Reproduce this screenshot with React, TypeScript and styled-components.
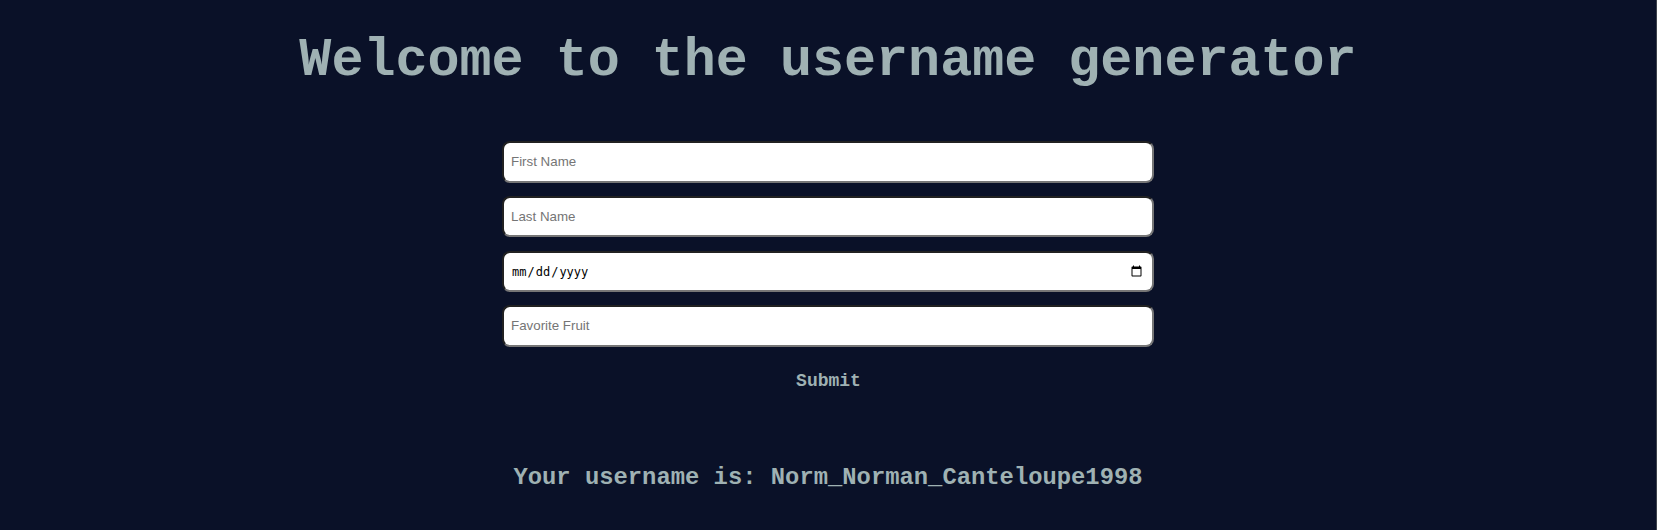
import React from 'react';
import styled, { createGlobalStyle } from 'styled-components';

const GlobalStyle = createGlobalStyle`
  * { box-sizing: border-box; }
  body { margin: 0; background: #0a1128; overflow: hidden; }
`;

const Page = styled.main`
  width: 100%;
  height: 530px;
  display: flex;
  flex-direction: column;
  align-items: center;
  border-right: 1px solid #3d424b;
  color: #9fb1b3;
  font-family: 'Courier New', 'Liberation Mono', monospace;
  font-weight: 700;
`;

const Title = styled.h1`
  margin: 31px 0 0;
  font-size: 53.4px;
  line-height: 60px;
  white-space: nowrap;
`;

const Form = styled.form`
  width: 652px;
  margin-top: 50.33px;
  display: flex;
  flex-direction: column;
  gap: 13.33px;
`;

const Field = styled.input`
  width: 100%;
  height: 41.33px;
  padding: 1px 7px 1px 7px;
  border: 2px solid;
  border-color: #212121 #767676 #767676 #212121;
  border-radius: 8px;
  background: #fff;
  color: #000;
  font: 13.333px Arial, 'Liberation Sans', sans-serif;
  &::placeholder { color: #757575; }
  &[type='date'] {
    padding-top: 2px;
    font: 12px 'DejaVu Sans Mono', monospace;
  }
  &::-webkit-calendar-picker-indicator {
    width: 13.33px;
    height: 13.33px;
  }
`;

const Submit = styled.button`
  align-self: center;
  margin: 9px 0 0 1px;
  padding: 0;
  border: 0;
  background: transparent;
  color: inherit;
  font: 700 18px/24px 'Courier New', 'Liberation Mono', monospace;
`;

const Result = styled.p`
  margin: 70px 0 0;
  font-size: 23.83px;
  line-height: 30px;
`;

export default function App() {
  return (
    <>
      <GlobalStyle />
      <Page>
        <Title>Welcome to the username generator</Title>
        <Form onSubmit={(e) => e.preventDefault()}>
          <Field placeholder="First Name" />
          <Field placeholder="Last Name" />
          <Field type="date" />
          <Field placeholder="Favorite Fruit" />
          <Submit type="submit">Submit</Submit>
        </Form>
        <Result>Your username is: Norm_Norman_Canteloupe1998</Result>
      </Page>
    </>
  );
}
